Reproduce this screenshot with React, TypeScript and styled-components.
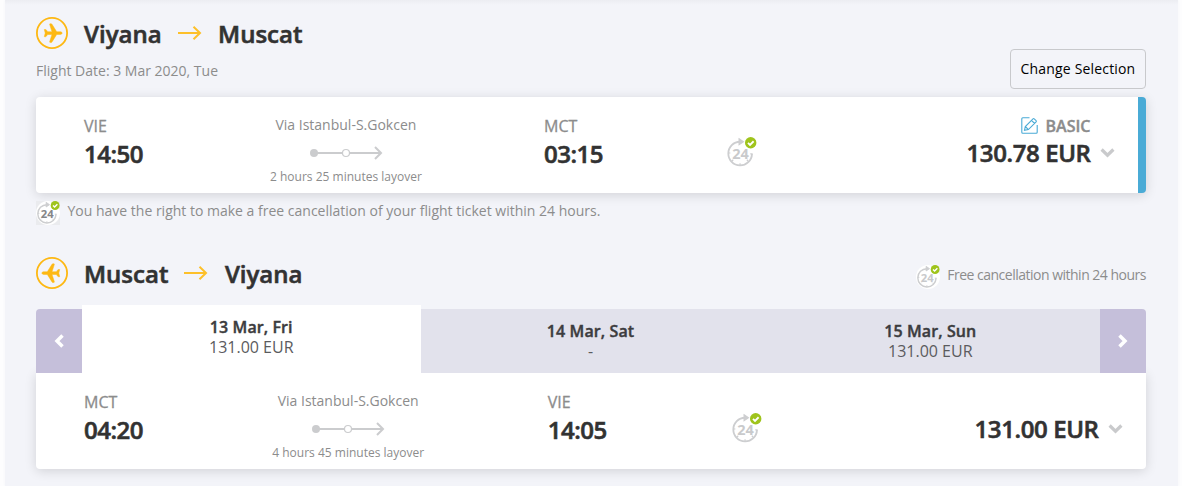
import styled, { createGlobalStyle } from "styled-components";

const GlobalStyle = createGlobalStyle`
    * {
        box-sizing: border-box;
    }

    body {
        margin: 0;
        background-color: #fdfdfe;
        font-family: "Open Sans", "Noto Sans", sans-serif;
    }
`;

const StyledMain = styled.main`
    height: 486px;
    margin: 0 4px 0 5px;
    padding: 0 32px 0 31px;
    overflow: hidden;
    background: linear-gradient(#ecedf2, #f3f4f9 5px);
    box-shadow: 0 0 3px #f3f4f9;
`;

const StyledLegHeader = styled.header<{ $height: number; $top: number }>`
    display: flex;
    justify-content: space-between;
    height: ${({ $height }) => $height}px;
    padding-top: ${({ $top }) => $top}px;
`;

const StyledRoute = styled.div`
    display: flex;
    align-items: center;
    height: 32px;
`;

const StyledCity = styled.h2`
    margin: 0;
    padding-top: 2px;
    font-size: 24px;
    font-weight: 600;
    line-height: 32px;
    color: #323232;
    -webkit-text-stroke: 0.6px;
`;

const StyledPlane = styled.svg<{ $back?: boolean }>`
    width: 32px;
    height: 32px;
    margin-right: 16px;
    transform: ${({ $back }) => ($back ? "scaleX(-1)" : "none")};
`;

const StyledArrow = styled.svg`
    width: 24px;
    height: 16px;
    margin: 0 16.5px 0 16px;
`;

const StyledDate = styled.div`
    margin-top: 12px;
    font-size: 14px;
    line-height: 20px;
    color: #8c8c8c;
`;

const StyledButton = styled.button`
    width: 136px;
    height: 40px;
    margin-top: 32px;
    padding: 0;
    border: 1px solid #c8c9cc;
    border-radius: 4px;
    background: transparent;
    font: 500 14px/20px "Open Sans", sans-serif;
    letter-spacing: 0.17px;
    color: #000;
`;

const StyledCard = styled.section<{ $selected?: boolean }>`
    display: grid;
    grid-template-columns: 10.15% 35.95% 16.5% 1fr auto;
    height: 96px;
    border-right: ${({ $selected }) => ($selected ? "8px solid #4aabd6" : "none")};
    border-radius: ${({ $selected }) => ($selected ? "4px" : "0 0 4px 4px")};
    background-color: #fff;
    box-shadow: 0 2px 12px rgba(0, 0, 0, 0.14);
`;

const StyledStop = styled.div<{ $indent?: number }>`
    padding: 19px 0 0 ${({ $indent }) => $indent || 0}px;
    white-space: nowrap;
`;

const StyledCode = styled.div`
    font-size: 16px;
    font-weight: 500;
    line-height: 21px;
    color: #8c8c8c;
    -webkit-text-stroke: 0.3px;
`;

const StyledTime = styled.div`
    font-size: 24px;
    font-weight: 600;
    letter-spacing: -0.5px;
    line-height: 34px;
    color: #323232;
    -webkit-text-stroke: 0.6px;
`;

const StyledVia = styled.div`
    display: flex;
    flex-direction: column;
    align-items: center;
    padding-top: 18px;
    font-size: 14px;
    line-height: 20px;
    color: #8c8c8c;
`;

const StyledTrack = styled.svg`
    width: 74px;
    height: 16px;
    margin: 10px 0 6px;
`;

const StyledLayover = styled.div`
    font-size: 12px;
    line-height: 20px;
`;

const StyledBadgeCell = styled.div`
    padding-top: 40px;
`;

const StyledPriceCell = styled.div`
    display: flex;
    flex-direction: column;
    align-items: flex-end;
    padding: 18px 23px 0 0;
    white-space: nowrap;
`;

const StyledFare = styled.div`
    display: flex;
    align-items: center;
    gap: 8px;
    height: 21px;
    padding-right: 24.5px;
    font-size: 16px;
    font-weight: 600;
    color: #8c8c8c;
    -webkit-text-stroke: 0.4px;
`;

const StyledPrice = styled.div`
    display: flex;
    align-items: center;
    gap: 9.5px;
    font-size: 24px;
    font-weight: 600;
    letter-spacing: -0.4px;
    line-height: 34px;
    color: #323232;
    -webkit-text-stroke: 0.6px;
`;

const StyledNote = styled.div`
    display: flex;
    gap: 7.5px;
    height: 48px;
    padding-top: 8px;
    font-size: 14px;
    line-height: 20px;
    color: #8c8c8c;
`;

const StyledNoteIcon = styled.span<{ $square?: boolean }>`
    display: flex;
    width: 24px;
    height: 24px;
    border-radius: ${({ $square }) => ($square ? "0" : "50%")};
    background: ${({ $square }) =>
        $square ? "radial-gradient(circle, #fff 11.5px, #eaebee 12.5px)" : "#fff"};
`;

const StyledFreeNote = styled.div`
    display: flex;
    gap: 7.5px;
    padding-top: 8px;
    font-size: 14px;
    letter-spacing: -0.5px;
    line-height: 20px;
    color: #8c8c8c;
`;

const StyledTabs = styled.nav`
    display: grid;
    grid-template-columns: 46px 338.5px 340px 339.5px 46px;
    align-items: end;
    height: 68px;
`;

const StyledPager = styled.button<{ $side: "left" | "right" }>`
    display: flex;
    align-items: center;
    justify-content: center;
    height: 64px;
    padding: 0;
    border: 0;
    border-radius: ${({ $side }) => ($side === "left" ? "4px 0 0 0" : "0 4px 0 0")};
    background-color: #c5bfda;
`;

const StyledTab = styled.div<{ $active?: boolean }>`
    position: relative;
    z-index: ${({ $active }) => ($active ? 1 : 0)};
    height: ${({ $active }) => ($active ? 68 : 64)}px;
    padding-top: 12px;
    background-color: ${({ $active }) => ($active ? "#fff" : "#e2e2ec")};
    font-size: 16px;
    line-height: 20px;
    text-align: center;
    color: #5b5b5e;
`;

const StyledDay = styled.div`
    font-weight: 600;
    letter-spacing: 0.1px;
    color: #3c3c3e;
    -webkit-text-stroke: 0.4px;
`;

function Plane({ back }: { back?: boolean }) {
    return (
        <StyledPlane viewBox="0 0 32 32" $back={back}>
            <circle cx="16" cy="16" r="15.1" fill="none" stroke="#fdb813" strokeWidth="1.8" />
            <path
                d="M8.3 12.5h1.2c.4 0 .6.1.8.4l1.300 1.800 4.400.1-2.300-7.200c-.2-.6.1-.9.6-.9h.7c.5 0 .8.2 1 .6l4.700 7.500h3.700c1 0 1.700.6 1.700 1.300s-.7 1.300-1.700 1.300h-3.700L16 24.900c-.2.400-.5.600-1 .600h-.7c-.5 0-.8-.3-.6-.9L16 17.400l-4.400.1-1.300 1.800c-.2.300-.4.400-.8.400H8.300l.9-3.600z"
                fill="#fdb813"
                stroke="#fdb813"
                strokeWidth="0.5"
            />
        </StyledPlane>
    );
}

function Arrow() {
    return (
        <StyledArrow viewBox="0 0 24 16" fill="none" stroke="#fdc02a" strokeWidth="2">
            <path d="M0 8h22M15.5 1.700l6.500 6.300-6.500 6.300" />
        </StyledArrow>
    );
}

function Clock24({ size, color = "#c9cacc" }: { size: number; color?: string }) {
    return (
        <svg width={size} height={size} viewBox="0 0 32 32" fill="none">
            <path d="M26.800 17.500A12.200 12.200 0 1 1 14.500 4.900" stroke="#cdced0" strokeWidth="1.900" />
            <path
                d="M13.500 1.800l4.500 3.100-4.500 3.100zM2.500 16.500h2M14.500 27v2M25 17.500h2.500M6 25l1.500-1.500M21.500 23.500l1.500 1.500"
                fill="#cdced0"
                stroke="#cdced0"
                strokeWidth="1.200"
            />
            <text x="14.900" y="22.200" textAnchor="middle" fontSize="15" fontWeight="700" letterSpacing="0" fill={color}>
                24
            </text>
            <circle cx="25.500" cy="6" r="5.900" fill="#9fc41c" />
            <path d="M22.700 6l2.100 2.100 3.700-3.700" stroke="#fff" strokeWidth="1.900" />
        </svg>
    );
}

function Edit() {
    return (
        <svg width="17" height="17" viewBox="0 0 17 17" fill="none" stroke="#4aabd6" strokeWidth="1.1">
            <path d="M8.500.8H1.800c-.7 0-1 .3-1 1v13.400c0 .7.300 1 1 1h13.400c.7 0 1-.3 1-1V8" />
            <path d="M3.500 13.300l.8-3.800 7.700-7.700c.4-.4.8-.4 1.200 0l1.900 1.900c.4.4.4.8 0 1.200l-7.700 7.700zM4.300 9.500l3.100 3.100M10.500 3.400l3.100 3.100" />
        </svg>
    );
}

function Chevron() {
    return (
        <svg width="15" height="12" viewBox="0 0 15 12" fill="none" stroke="#c9cacc" strokeWidth="3.200">
            <path d="M1.600 2.500l5.900 5.700 5.900-5.700" />
        </svg>
    );
}

type FlightProps = {
    from: string;
    to: string;
    departure: string;
    arrival: string;
    layover: string;
    price: string;
    fare?: string;
};

function Flight({ from, to, departure, arrival, layover, price, fare }: FlightProps) {
    return (
        <StyledCard $selected={!!fare}>
            <StyledStop $indent={48}>
                <StyledCode>{from}</StyledCode>
                <StyledTime>{departure}</StyledTime>
            </StyledStop>
            <StyledVia>
                <div>Via Istanbul-S.Gokcen</div>
                <StyledTrack viewBox="0 0 74 16" fill="none" stroke="#cbccce" strokeWidth="2">
                    <path d="M5 8h67M66 2l6 6-6 6" />
                    <circle cx="5" cy="8" r="4" fill="#cbccce" stroke="none" />
                    <circle cx="37" cy="8" r="3.500" fill="#fff" strokeWidth="1.200" />
                </StyledTrack>
                <StyledLayover>{layover}</StyledLayover>
            </StyledVia>
            <StyledStop>
                <StyledCode>{to}</StyledCode>
                <StyledTime>{arrival}</StyledTime>
            </StyledStop>
            <StyledBadgeCell>
                <Clock24 size={31} />
            </StyledBadgeCell>
            <StyledPriceCell>
                <StyledFare>
                    {fare && <Edit />}
                    {fare}
                </StyledFare>
                <StyledPrice>
                    {price}
                    <Chevron />
                </StyledPrice>
            </StyledPriceCell>
        </StyledCard>
    );
}

export default function App() {
    return (
        <StyledMain>
            <GlobalStyle />
            <StyledLegHeader $height={97} $top={17}>
                <div>
                    <StyledRoute>
                        <Plane />
                        <StyledCity>Viyana</StyledCity>
                        <Arrow />
                        <StyledCity>Muscat</StyledCity>
                    </StyledRoute>
                    <StyledDate>Flight Date: 3 Mar 2020, Tue</StyledDate>
                </div>
                <StyledButton>Change Selection</StyledButton>
            </StyledLegHeader>
            <Flight
                from="VIE"
                to="MCT"
                departure="14:50"
                arrival="03:15"
                layover="2 hours 25 minutes layover"
                price="130.78 EUR"
                fare="BASIC"
            />
            <StyledNote>
                <StyledNoteIcon $square>
                    <Clock24 size={24} color="#858688" />
                </StyledNoteIcon>
                You have the right to make a free cancellation of your flight ticket within 24 hours.
            </StyledNote>

            <StyledLegHeader $height={64} $top={16}>
                <StyledRoute>
                    <Plane back />
                    <StyledCity>Muscat</StyledCity>
                    <Arrow />
                    <StyledCity>Viyana</StyledCity>
                </StyledRoute>
                <StyledFreeNote>
                    <StyledNoteIcon>
                        <Clock24 size={24} />
                    </StyledNoteIcon>
                    Free cancellation within 24 hours
                </StyledFreeNote>
            </StyledLegHeader>
            <StyledTabs>
                <StyledPager $side="left">
                    <svg width="12" height="16" viewBox="0 0 12 16" fill="none" stroke="#fff" strokeWidth="3.500">
                        <path d="M9.500 2.500L4 8l5.500 5.500" />
                    </svg>
                </StyledPager>
                <StyledTab $active>
                    <StyledDay>13 Mar, Fri</StyledDay>
                    131.00 EUR
                </StyledTab>
                <StyledTab>
                    <StyledDay>14 Mar, Sat</StyledDay>
                    -
                </StyledTab>
                <StyledTab>
                    <StyledDay>15 Mar, Sun</StyledDay>
                    131.00 EUR
                </StyledTab>
                <StyledPager $side="right">
                    <svg width="12" height="16" viewBox="0 0 12 16" fill="none" stroke="#fff" strokeWidth="3.500">
                        <path d="M2.500 2.500L8 8l-5.500 5.500" />
                    </svg>
                </StyledPager>
            </StyledTabs>
            <Flight
                from="MCT"
                to="VIE"
                departure="04:20"
                arrival="14:05"
                layover="4 hours 45 minutes layover"
                price="131.00 EUR"
            />
        </StyledMain>
    );
}
